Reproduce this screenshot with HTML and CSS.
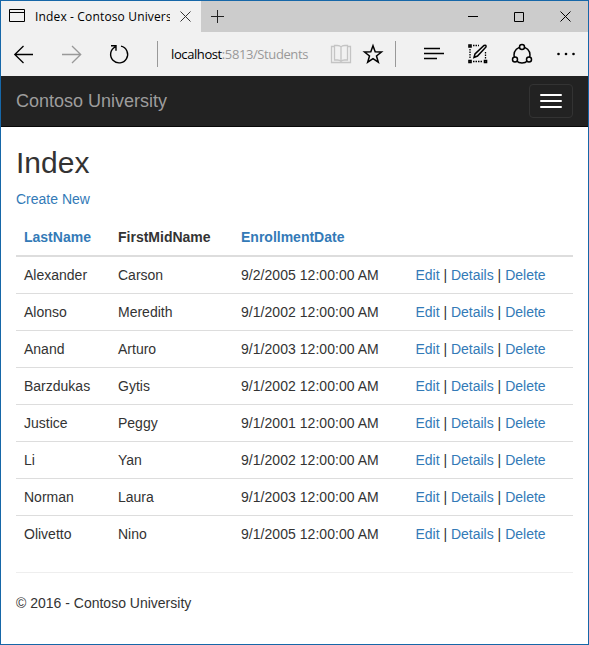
FILE: index.html
```html
<!DOCTYPE html>
<html lang="en">
<head>
<meta charset="utf-8">
<title>Index - Contoso University</title>
<link rel="stylesheet" href="styles.css">
</head>
<body>
<div class="window">
  <header class="titlebar">
    <div class="tab">
      <svg class="tab-icon" width="16" height="13" viewBox="0 0 16 13"><path d="M.5.5h15v12H.5zM.5 3.500h15"/></svg>
      <span class="tab-title">Index - Contoso University</span>
      <svg class="tab-close" width="11" height="11" viewBox="0 0 11 11"><path d="M.5.5l10 10M10.500.5l-10 10"/></svg>
    </div>
    <svg class="new-tab" width="13" height="13" viewBox="0 0 13 13"><path d="M0 6.500h13M6.500 0v13"/></svg>
    <div class="controls">
      <svg width="10" height="11" viewBox="0 0 10 11"><path d="M0 5.500h10"/></svg>
      <svg width="10" height="10" viewBox="0 0 10 10"><path d="M.5.5h9v9h-9z"/></svg>
      <svg width="11" height="11" viewBox="0 0 11 11"><path d="M.5.5l10 10M10.500.5l-10 10"/></svg>
    </div>
  </header>
  <div class="toolbar">
    <svg class="icon back" viewBox="0 0 24 24"><path d="M2.500 12.500H21M11.500 4l-8.700 8.500 8.700 8.500"/></svg>
    <svg class="icon forward" viewBox="0 0 24 24"><path d="M2 12.500h18.500M12 4l8.700 8.500L12 21"/></svg>
    <svg class="icon refresh" viewBox="0 0 24 24"><path d="M14 4.100A8.500 8.500 0 1 1 8.300 4.800M4 3.700h5v5"/></svg>
    <span class="separator"></span>
    <span class="address">localhost<span class="path">:5813/Students</span></span>
    <svg class="icon book" viewBox="0 0 24 24"><path d="M12 5v14.500M12 5Q11 3.500 8.500 3.500H5.500V18H8.500Q11 18 12 19.500M12 5Q13 3.500 15.500 3.500H18.500V18H15.500Q13 18 12 19.500M5.500 4.500h-3v16h19v-16h-3"/></svg>
    <svg class="icon star" viewBox="0 0 24 24"><path d="M12 3.700l2.200 6.100 6.300.2-5 4 1.800 6.200-5.300-3.600-5.300 3.600 1.800-6.200-5-4 6.300-.2z"/></svg>
    <span class="separator second"></span>
    <svg class="icon hub" viewBox="0 0 24 24"><path d="M2 6.500h16M2 11.500h20M2 16.500h13"/></svg>
    <svg class="icon note" viewBox="0 0 24 24"><path class="corner" d="M3 3h2v2H3zM3 18.500h2v2H3zM18.500 18.500h2v2h-2z"/><path class="dots" d="M7 3.500h6M4 7v10M7 19.500h10M19.500 10v7"/><path class="pen" d="M8 15.500l1-3.500 9-8.500q2.500-1 2 1.500l-8.500 9z"/></svg>
    <svg class="icon share" viewBox="0 0 24 24"><circle cx="12" cy="13" r="8"/><circle class="node" cx="12" cy="5" r="2.500"/><circle class="node" cx="5" cy="17.500" r="2.500"/><circle class="node" cx="19" cy="17.500" r="2.500"/></svg>
    <svg class="icon more" viewBox="0 0 24 24"><circle cx="4.500" cy="12" r="1.300"/><circle cx="12" cy="12" r="1.300"/><circle cx="19.500" cy="12" r="1.300"/></svg>
  </div>
  <nav class="navbar">
    <a class="brand">Contoso University</a>
    <button class="toggle" aria-label="Menu"><span></span><span></span><span></span></button>
  </nav>
  <main class="content">
    <h2>Index</h2>
    <p class="create"><a>Create New</a></p>
    <table>
      <colgroup><col class="last"><col class="first"><col class="date"><col></colgroup>
      <thead><tr><th><a>LastName</a></th><th>FirstMidName</th><th><a>EnrollmentDate</a></th><th></th></tr></thead>
      <tbody>
        <tr><td>Alexander</td><td>Carson</td><td>9/2/2005 12:00:00 AM</td><td><a>Edit</a> | <a>Details</a> | <a>Delete</a></td></tr>
        <tr><td>Alonso</td><td>Meredith</td><td>9/1/2002 12:00:00 AM</td><td><a>Edit</a> | <a>Details</a> | <a>Delete</a></td></tr>
        <tr><td>Anand</td><td>Arturo</td><td>9/1/2003 12:00:00 AM</td><td><a>Edit</a> | <a>Details</a> | <a>Delete</a></td></tr>
        <tr><td>Barzdukas</td><td>Gytis</td><td>9/1/2002 12:00:00 AM</td><td><a>Edit</a> | <a>Details</a> | <a>Delete</a></td></tr>
        <tr><td>Justice</td><td>Peggy</td><td>9/1/2001 12:00:00 AM</td><td><a>Edit</a> | <a>Details</a> | <a>Delete</a></td></tr>
        <tr><td>Li</td><td>Yan</td><td>9/1/2002 12:00:00 AM</td><td><a>Edit</a> | <a>Details</a> | <a>Delete</a></td></tr>
        <tr><td>Norman</td><td>Laura</td><td>9/1/2003 12:00:00 AM</td><td><a>Edit</a> | <a>Details</a> | <a>Delete</a></td></tr>
        <tr><td>Olivetto</td><td>Nino</td><td>9/1/2005 12:00:00 AM</td><td><a>Edit</a> | <a>Details</a> | <a>Delete</a></td></tr>
      </tbody>
    </table>
    <footer>© 2016 - Contoso University</footer>
  </main>
</div>
</body>
</html>
```
FILE: styles.css
```css
* { box-sizing: border-box; }
body {
  margin: 0;
  font: 14px/20px "Liberation Sans", Arial, sans-serif;
  color: #333;
}
.window {
  height: 645px;
  border: 1px solid #1667a8;
  background: #fff;
  overflow: hidden;
}
svg { display: block; flex: none; fill: none; stroke: #000; }
a { color: #337ab7; }

.titlebar { display: flex; align-items: center; height: 31px; background: #ccc; }
.tab {
  display: flex;
  align-items: center;
  width: 200px;
  height: 31px;
  padding-left: 8px;
  background: #f1f1f1;
}
.tab-icon { margin-top: -2px; }
.tab-title {
  width: 135px;
  margin-left: 10px;
  overflow: hidden;
  white-space: nowrap;
  font: 12px/20px "Open Sans", sans-serif;
  letter-spacing: 0.15px;
  color: #000;
}
.tab-close { margin-left: 10px; stroke: #333; }
.new-tab { margin-left: 10px; stroke: #222; }
.controls { display: flex; align-items: center; gap: 36px; margin-left: auto; margin-right: 17px; }

.toolbar { display: flex; align-items: center; height: 44px; padding-left: 11px; background: #f1f1f1; }
.icon { width: 24px; height: 24px; stroke-width: 1.3; }
.forward { margin-left: 24px; stroke: #999; }
.refresh { margin-left: 23px; stroke-width: 1.4; }
.separator { width: 1px; height: 26px; margin-left: 26px; background: #999; }
.address {
  width: 158px;
  margin-left: 13px;
  white-space: nowrap;
  font: 13px/20px "Open Sans", sans-serif;
  letter-spacing: -0.4px;
  color: #000;
}
.path { color: #999; }
.book { stroke: #c4c4c4; }
.star { margin-left: 8px; stroke-width: 1.5; }
.second { margin-left: 10px; }
.hub { margin-left: 26px; }
.note { margin-left: 20px; }
.corner { stroke-width: 1.6; }
.dots { stroke-dasharray: 1.5 1; }
.pen { fill: #f1f1f1; stroke-width: 1.5; }
.share { margin-left: 20px; stroke-width: 1.5; }
.node { fill: #f1f1f1; }
.more { margin-left: 20px; fill: #000; stroke: none; }

.navbar {
  display: flex;
  align-items: center;
  justify-content: space-between;
  height: 51px;
  padding: 0 15px;
  background: #222;
  border-bottom: 1px solid #080808;
}
.brand { font-size: 18px; color: #9d9d9d; }
.toggle {
  display: flex;
  flex-direction: column;
  gap: 4px;
  width: 44px;
  height: 34px;
  padding: 9px 10px;
  background: transparent;
  border: 1px solid #333;
  border-radius: 4px;
}
.toggle span { height: 2px; border-radius: 1px; background: #fff; }

.content { padding: 19px 15px 0; }
h2 { margin: 0 0 10px; font-size: 30px; line-height: 33px; font-weight: 400; }
.create { margin: 0 0 10px; }
table { width: 100%; table-layout: fixed; border-collapse: separate; border-spacing: 0; }
.last { width: 94px; }
.first { width: 123px; }
.date { width: 174.4px; }
th, td { padding: 8px; text-align: left; white-space: nowrap; }
th { border-bottom: 2px solid #ddd; }
tbody tr + tr td { border-top: 1px solid #ddd; }
td:nth-child(3) { letter-spacing: 0.04px; }
footer { margin-top: 20px; padding-top: 20px; border-top: 1px solid #eee; }
```
